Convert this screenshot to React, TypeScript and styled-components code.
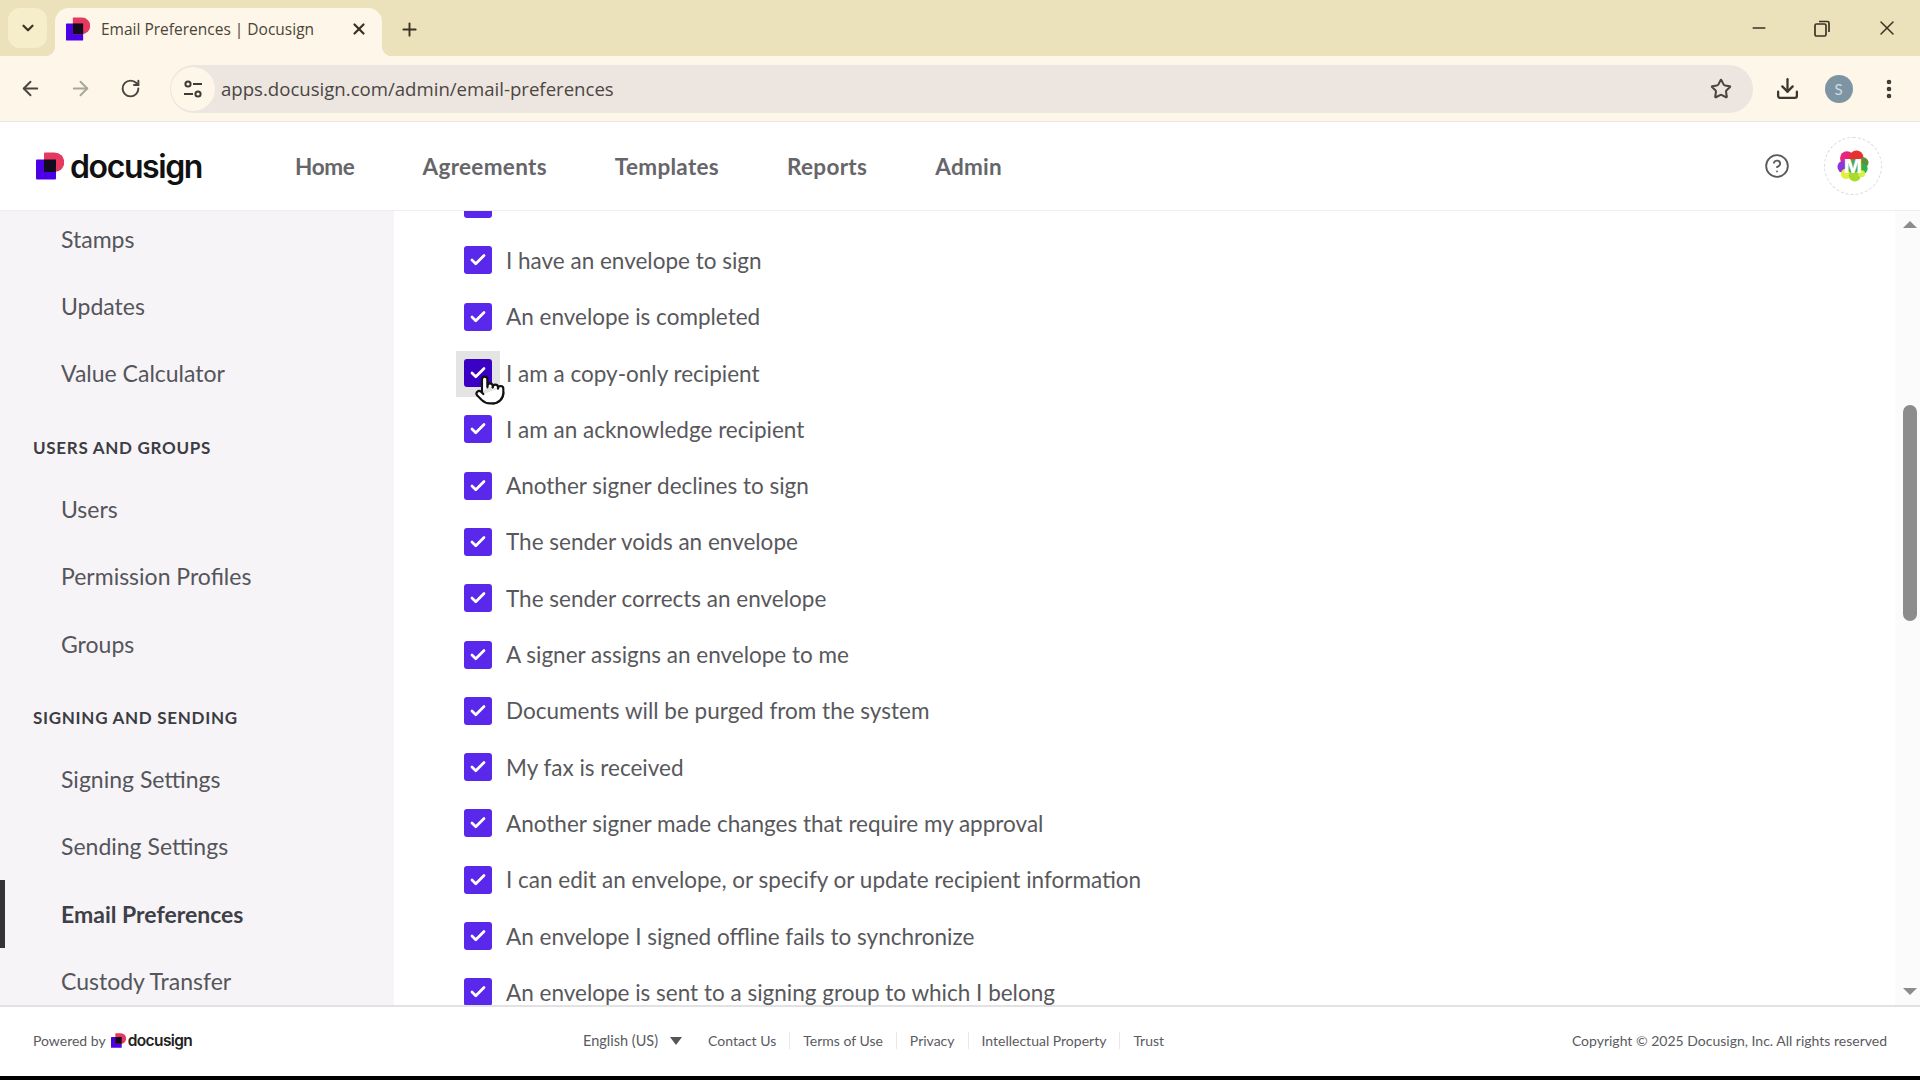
import styled, { createGlobalStyle } from 'styled-components'
import {
  ArrowLeft,
  ArrowRight,
  Check,
  ChevronDown,
  CircleHelp,
  Download,
  EllipsisVertical,
  Minus,
  Plus,
  Pointer,
  RotateCw,
  Star,
  X
} from 'lucide-react'

const GlobalStyle = createGlobalStyle`
  html, body {
    margin: 0;
    height: 100%;
    overflow: hidden;
    background: #000;
  }
`

const sideGroups = [
  { title: '', items: ['Stamps', 'Updates', 'Value Calculator'] },
  { title: 'USERS AND GROUPS', items: ['Users', 'Permission Profiles', 'Groups'] },
  {
    title: 'SIGNING AND SENDING',
    items: ['Signing Settings', 'Sending Settings', 'Email Preferences', 'Custody Transfer']
  }
]

const prefs = [
  '',
  'I have an envelope to sign',
  'An envelope is completed',
  'I am a copy-only recipient',
  'I am an acknowledge recipient',
  'Another signer declines to sign',
  'The sender voids an envelope',
  'The sender corrects an envelope',
  'A signer assigns an envelope to me',
  'Documents will be purged from the system',
  'My fax is received',
  'Another signer made changes that require my approval',
  'I can edit an envelope, or specify or update recipient information',
  'An envelope I signed offline fails to synchronize',
  'An envelope is sent to a signing group to which I belong'
]

const LogoMark = ({ size }: { size: number }) => (
  <svg width={size} height={size} viewBox="0 0 28 27">
    <rect x="0" y="7" width="20" height="20" rx="1" fill="#4c00e8" />
    <path d="M8 1a1 1 0 0 1 1-1h9.5a9.75 9.75 0 0 1 0 19.5H8z" fill="#e6395f" />
    <rect x="8" y="7" width="12" height="12.5" fill="#120a1e" />
  </svg>
)

export default function App() {
  return (
    <Page>
      <GlobalStyle />
      <TabStrip>
        <TabMenu>
          <ChevronDown size={18} strokeWidth={3} />
        </TabMenu>
        <Tab>
          <LogoMark size={24} />
          <TabTitle>Email Preferences | Docusign</TabTitle>
          <X size={18} strokeWidth={3} color="#3b3324" />
        </Tab>
        <NewTab>
          <Plus size={21} strokeWidth={2.2} />
        </NewTab>
        <WindowButtons>
          <Minus size={20} strokeWidth={1.8} />
          <svg width="18" height="18" viewBox="0 0 18 18" fill="none" stroke="#3b3324" strokeWidth="1.7">
            <rect x="2" y="5" width="11" height="12" rx="1.5" />
            <path d="M6 2.5 h8.5 a1.5 1.5 0 0 1 1.5 1.5 v9" />
          </svg>
          <X size={24} strokeWidth={1.5} />
        </WindowButtons>
      </TabStrip>

      <Toolbar>
        <ToolIcon>
          <ArrowLeft size={23} strokeWidth={2} />
        </ToolIcon>
        <ToolIcon $dim>
          <ArrowRight size={23} strokeWidth={2} />
        </ToolIcon>
        <ToolIcon>
          <RotateCw size={21} strokeWidth={2.2} />
        </ToolIcon>
        <AddressBar>
          <SiteInfo>
            <svg width="22" height="22" viewBox="0 0 22 22" fill="none" stroke="#3f3a33" strokeWidth="2">
              <circle cx="6" cy="6" r="2.6" />
              <path d="M11 6h9" />
              <circle cx="16" cy="16" r="2.6" />
              <path d="M2 16h9" />
            </svg>
          </SiteInfo>
          <Url>apps.docusign.com/admin/email-preferences</Url>
          <Star size={22} strokeWidth={2.2} color="#4a453e" />
        </AddressBar>
        <ToolActions>
          <Download size={25} strokeWidth={2.2} color="#3d382f" />
          <ProfileChip>S</ProfileChip>
          <EllipsisVertical size={24} strokeWidth={2.6} color="#3d382f" />
        </ToolActions>
      </Toolbar>

      <Header>
        <Logo>
          <LogoMark size={28} />
          <LogoText>docusign</LogoText>
        </Logo>
        <Nav>
          <NavLink>Home</NavLink>
          <NavLink>Agreements</NavLink>
          <NavLink>Templates</NavLink>
          <NavLink>Reports</NavLink>
          <NavLink>Admin</NavLink>
        </Nav>
        <HeaderRight>
          <CircleHelp size={26} strokeWidth={1.7} color="#5b5b5b" />
          <Avatar>
            <svg width="38" height="38" viewBox="0 0 44 44">
              <circle cx="15" cy="13" r="8" fill="#e5267a" />
              <circle cx="26" cy="12" r="8" fill="#e8312f" />
              <circle cx="34" cy="18" r="6" fill="#5f8f3a" />
              <circle cx="11" cy="23" r="7" fill="#8c35d8" />
              <circle cx="33" cy="25" r="6" fill="#2fb24a" />
              <circle cx="14" cy="31" r="6" fill="#e6ee3c" />
              <circle cx="24" cy="33" r="7" fill="#a8dc2c" />
              <circle cx="32" cy="31" r="4" fill="#d9ef45" />
              <circle cx="22" cy="22" r="8" fill="#45a85a" />
            </svg>
            <AvatarLetter>M</AvatarLetter>
          </Avatar>
        </HeaderRight>
      </Header>

      <Body>
        <Sidebar>
          <SideScroll>
            {sideGroups.map(group => (
              <div key={group.items[0]}>
                {group.title && <SideHeading>{group.title}</SideHeading>}
                {group.items.map(item => (
                  <SideItem
                    key={item}
                    $active={item === 'Email Preferences'}>
                    {item}
                  </SideItem>
                ))}
              </div>
            ))}
          </SideScroll>
        </Sidebar>
        <Content>
          <PrefList>
            {prefs.map(label => (
              <PrefRow key={label || 'clipped'}>
                <CheckBox $hover={label === 'I am a copy-only recipient'}>
                  <Check size={18} strokeWidth={3.6} color="#fff" />
                </CheckBox>
                <span>{label}</span>
                {label === 'I am a copy-only recipient' && (
                  <HandCursor>
                    <Pointer size={32} strokeWidth={1.6} color="#111" fill="#fff" />
                  </HandCursor>
                )}
              </PrefRow>
            ))}
          </PrefList>
        </Content>
        <ScrollTrack>
          <ArrowUp />
          <Thumb />
          <ArrowDown />
        </ScrollTrack>
      </Body>

      <Footer>
        <Powered>
          Powered by
          <LogoMark size={15} />
          <PoweredName>docusign</PoweredName>
        </Powered>
        <Language>
          English (US)
          <Caret />
        </Language>
        <FooterLinks>
          <FooterLink>Contact Us</FooterLink>
          <FooterLink>Terms of Use</FooterLink>
          <FooterLink>Privacy</FooterLink>
          <FooterLink>Intellectual Property</FooterLink>
          <FooterLink>Trust</FooterLink>
        </FooterLinks>
        <Copyright>Copyright © 2025 Docusign, Inc. All rights reserved</Copyright>
      </Footer>
    </Page>
  )
}

const Page = styled.div`
  width: 1920px;
  height: 1080px;
  display: flex;
  flex-direction: column;
  overflow: hidden;
  background: #000;
  font-family: 'Lato', 'Liberation Sans', sans-serif;
`

const TabStrip = styled.div`
  flex: 0 0 56px;
  display: flex;
  align-items: flex-end;
  padding-left: 8px;
  background: #ebe2bc;
  color: #3b3324;
`

const TabMenu = styled.div`
  width: 39px;
  height: 40px;
  margin-bottom: 8px;
  border-radius: 12px;
  background: #f6eecb;
  display: flex;
  align-items: center;
  justify-content: center;
`

const Tab = styled.div`
  position: relative;
  width: 327px;
  height: 48px;
  margin-left: 8px;
  padding: 0 14px 6px 11px;
  box-sizing: border-box;
  display: flex;
  align-items: center;
  border-radius: 14px 14px 0 0;
  background: #fdf6e9;

  &::before,
  &::after {
    content: '';
    position: absolute;
    bottom: 0;
    width: 10px;
    height: 10px;
  }
  &::before {
    left: -10px;
    background: radial-gradient(circle at 0 0, transparent 10px, #fdf6e9 10.5px);
  }
  &::after {
    right: -10px;
    background: radial-gradient(circle at 100% 0, transparent 10px, #fdf6e9 10.5px);
  }
`

const TabTitle = styled.span`
  flex: 1;
  margin-left: 11px;
  font-family: 'Open Sans', sans-serif;
  font-size: 15.5px;
  color: #4a4438;
`

const NewTab = styled.div`
  margin-left: 17px;
  height: 48px;
  padding-bottom: 6px;
  box-sizing: border-box;
  display: flex;
  align-items: center;
`

const WindowButtons = styled.div`
  margin-left: auto;
  height: 56px;
  width: 171px;
  padding-right: 21px;
  box-sizing: border-box;
  display: flex;
  align-items: center;
  justify-content: space-between;
`

const Toolbar = styled.div`
  flex: 0 0 65px;
  display: flex;
  align-items: center;
  background: #fdf6e9;
`

const ToolIcon = styled.div<{ $dim?: boolean }>`
  width: 50px;
  display: flex;
  justify-content: center;
  padding-left: 11px;
  box-sizing: border-box;
  color: ${p => (p.$dim ? '#aaa59b' : '#4a453e')};
`

const AddressBar = styled.div`
  width: 1583px;
  height: 48px;
  margin-left: 20px;
  padding-right: 21px;
  box-sizing: border-box;
  display: flex;
  align-items: center;
  border-radius: 24px;
  background: #ece5e0;
`

const SiteInfo = styled.div`
  width: 44px;
  height: 44px;
  margin-left: 1px;
  border-radius: 50%;
  background: #fdf6e9;
  display: flex;
  align-items: center;
  justify-content: center;
`

const Url = styled.span`
  flex: 1;
  margin-left: 6px;
  font-family: 'Open Sans', sans-serif;
  font-size: 18.6px;
  color: #4b4642;
`

const ToolActions = styled.div`
  flex: 1;
  padding: 0 19px 0 22px;
  display: flex;
  align-items: center;
  justify-content: space-between;
`

const ProfileChip = styled.div`
  width: 28px;
  height: 28px;
  border-radius: 50%;
  background: #7d95a3;
  color: #cfdbe2;
  font-size: 15px;
  line-height: 28px;
  text-align: center;
`

const Header = styled.div`
  flex: 0 0 89px;
  display: flex;
  align-items: center;
  padding-left: 36px;
  box-sizing: border-box;
  background: #fff;
  border-top: 1px solid #e9e6e0;
`

const Logo = styled.div`
  width: 259px;
  display: flex;
  align-items: center;
  gap: 6px;
`

const LogoText = styled.span`
  font-family: 'Inter', sans-serif;
  font-size: 32px;
  font-weight: 600;
  letter-spacing: -1.4px;
  color: #111;
`

const Nav = styled.nav`
  display: flex;
  gap: 68px;
`

const NavLink = styled.a`
  font-size: 22.5px;
  font-weight: 700;
  letter-spacing: 0.3px;
  color: #66666a;

  &:first-child {
    letter-spacing: -0.3px;
  }
`

const HeaderRight = styled.div`
  margin-left: auto;
  padding-right: 38px;
  display: flex;
  align-items: center;
  gap: 34px;
`

const Avatar = styled.div`
  position: relative;
  width: 56px;
  height: 56px;
  border: 1px dashed #d8d8d8;
  border-radius: 50%;
  display: flex;
  align-items: center;
  justify-content: center;
`

const AvatarLetter = styled.span`
  position: absolute;
  font-family: 'Inter', sans-serif;
  font-size: 19px;
  font-weight: 800;
  color: #fff;
`

const Body = styled.div`
  flex: 0 0 795px;
  display: flex;
  overflow: hidden;
  background: #fff;
  border-top: 1px solid #eeeeee;
  box-sizing: border-box;
`

const Sidebar = styled.aside`
  flex: 0 0 394px;
  overflow: hidden;
  background: #f6f4f6;
`

const SideScroll = styled.div`
  margin-top: -6px;
`

const SideHeading = styled.div`
  height: 68px;
  padding: 30px 0 0 33px;
  box-sizing: border-box;
  font-size: 17px;
  line-height: 21px;
  font-weight: 700;
  letter-spacing: 0.7px;
  color: #3c3c44;
`

const SideItem = styled.div<{ $active?: boolean }>`
  height: 67.4px;
  display: flex;
  align-items: center;
  font-size: 23px;
  font-weight: ${p => (p.$active ? 700 : 400)};
  color: ${p => (p.$active ? '#3f3f48' : '#55555c')};
  border-left: ${p => (p.$active ? '5px solid #333338' : 'none')};
  padding-left: ${p => (p.$active ? '56px' : '61px')};
`

const Content = styled.main`
  flex: 1;
  overflow: hidden;
  padding-left: 70px;
`

const PrefList = styled.div`
  margin-top: -35px;
  isolation: isolate;
`

const PrefRow = styled.label`
  position: relative;
  height: 56.3px;
  display: flex;
  align-items: center;
  gap: 14px;
  font-size: 22.5px;
  color: #58585c;
`

const CheckBox = styled.span<{ $hover?: boolean }>`
  position: relative;
  flex: 0 0 28px;
  height: 28px;
  border-radius: 3px;
  display: flex;
  align-items: center;
  justify-content: center;
  background: ${p => (p.$hover ? '#3a00c4' : '#5a28ea')};

  &::before {
    content: ${p => (p.$hover ? "''" : 'none')};
    position: absolute;
    inset: -8px -8px -10px -8px;
    z-index: -1;
    background: #e4e4e4;
  }
`

const HandCursor = styled.span`
  position: absolute;
  left: 10px;
  top: 29px;
  display: flex;
`

const ScrollTrack = styled.div`
  flex: 0 0 25px;
  padding-left: 8px;
  box-sizing: border-box;
  display: flex;
  flex-direction: column;
  background: #fbfbfb;
`

const ArrowUp = styled.div`
  width: 0;
  height: 0;
  margin-top: 10px;
  border: 7px solid transparent;
  border-top: 0;
  border-bottom: 7px solid #8c8c8c;
`

const Thumb = styled.div`
  width: 14px;
  height: 216px;
  margin-top: 177px;
  border-radius: 7px;
  background: #8c8c8c;
`

const ArrowDown = styled.div`
  width: 0;
  height: 0;
  margin-top: auto;
  margin-bottom: 10px;
  border: 7px solid transparent;
  border-bottom: 0;
  border-top: 7px solid #8c8c8c;
`

const Footer = styled.footer`
  flex: 0 0 71px;
  display: flex;
  align-items: center;
  padding: 0 33px 2px;
  box-sizing: border-box;
  background: #fff;
  border-top: 2px solid #e2e2e2;
  font-size: 14px;
  color: #5a5a60;
`

const Powered = styled.div`
  flex: 0 0 550px;
  display: flex;
  align-items: center;
  gap: 5px;
`

const PoweredName = styled.span`
  margin-left: -3px;
  font-family: 'Inter', sans-serif;
  font-size: 15.5px;
  font-weight: 600;
  letter-spacing: -0.6px;
  color: #222;
`

const Language = styled.div`
  display: flex;
  align-items: center;
  gap: 12px;
  margin-right: 13px;
  font-size: 14.5px;
`

const Caret = styled.span`
  width: 0;
  height: 0;
  border: 6px solid transparent;
  border-bottom: 0;
  border-top: 8px solid #55555c;
`

const FooterLinks = styled.div`
  display: flex;
`

const FooterLink = styled.a`
  padding: 0 13px;
  border-left: 1px solid #e8e8e8;
  &:first-child {
    border-left: none;
  }
`

const Copyright = styled.div`
  margin-left: auto;
`
